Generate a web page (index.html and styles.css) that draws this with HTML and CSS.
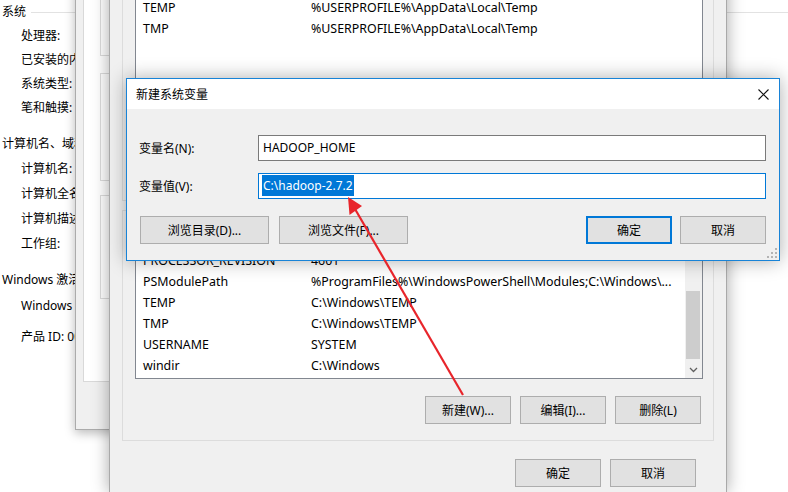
FILE: index.html
```html
<!DOCTYPE html>
<html lang="zh-CN">
<head>
<meta charset="utf-8">
<title>新建系统变量</title>
<link rel="stylesheet" href="styles.css">
</head>
<body>
<div class="cp">
  <div class="cp-row cp-head h24"><span>系统</span><i class="rule"></i></div>
  <div class="cp-row clip">处理器:</div>
  <div class="cp-row clip">已安装的内存(RAM):</div>
  <div class="cp-row clip">系统类型:</div>
  <div class="cp-row clip">笔和触摸:</div>
  <div class="cp-row cp-head clip gap12">计算机名、域和工作组设置</div>
  <div class="cp-row clip h25">计算机名:</div>
  <div class="cp-row clip h25">计算机全名:</div>
  <div class="cp-row clip h25">计算机描述:</div>
  <div class="cp-row clip h25">工作组:</div>
  <div class="cp-row cp-head clip gap12">Windows 激活</div>
  <div class="cp-row clip gap2">Windows 已激活</div>
  <div class="cp-row clip gap7">产品 ID: 00331-10000-00001-AA000</div>
</div>

<div class="win sysprops">
  <div class="tabpage">
    <div class="gb gb1"></div>
    <div class="gb gb2"></div>
    <div class="gb gb3"></div>
  </div>
</div>

<div class="win env">
  <div class="grp user-grp">
    <div class="list user-list">
      <div class="rows">
        <div class="row"><span class="c1">TEMP</span><span class="c2">%USERPROFILE%\AppData\Local\Temp</span></div>
        <div class="row"><span class="c1">TMP</span><span class="c2">%USERPROFILE%\AppData\Local\Temp</span></div>
      </div>
    </div>
    <div class="btns">
      <div class="btn"></div>
      <div class="btn"></div>
      <div class="btn"></div>
    </div>
  </div>
  <div class="grp sys-grp">
    <div class="list sys-list">
      <div class="rows">
        <div class="row"></div>
        <div class="row"><span class="c1">PROCESSOR_REVISION</span><span class="c2">4601</span></div>
        <div class="row"><span class="c1">PSModulePath</span><span class="c2">%ProgramFiles%\WindowsPowerShell\Modules;C:\Windows\...</span></div>
        <div class="row"><span class="c1">TEMP</span><span class="c2">C:\Windows\TEMP</span></div>
        <div class="row"><span class="c1">TMP</span><span class="c2">C:\Windows\TEMP</span></div>
        <div class="row"><span class="c1">USERNAME</span><span class="c2">SYSTEM</span></div>
        <div class="row"><span class="c1">windir</span><span class="c2">C:\Windows</span></div>
      </div>
      <div class="vscroll">
        <div class="sb-arrow"></div>
        <div class="sb-track"><div class="sb-thumb"></div></div>
        <div class="sb-arrow">
          <svg width="9" height="6" viewBox="0 0 9 6"><path d="M1 1 L4.5 4.5 L8 1" fill="none" stroke="#606060" stroke-width="1.3"/></svg>
        </div>
      </div>
    </div>
    <div class="btns">
      <div class="btn">新建(W)...</div>
      <div class="btn">编辑(I)...</div>
      <div class="btn">删除(L)</div>
    </div>
  </div>
  <div class="foot">
    <div class="btn">确定</div>
    <div class="btn">取消</div>
  </div>
</div>

<div class="dlg">
  <div class="dlg-title">
    <span class="dlg-t">新建系统变量</span>
    <span class="dlg-close">
      <svg width="11" height="11" viewBox="0 0 11 11"><path d="M0.5 0.5 L10.5 10.5 M10.5 0.5 L0.5 10.5" stroke="#111" stroke-width="1.1"/></svg>
    </span>
  </div>
  <div class="dlg-body">
    <div class="frow">
      <span class="flabel">变量名(N):</span>
      <div class="field">HADOOP_HOME</div>
    </div>
    <div class="frow frow2">
      <span class="flabel">变量值(V):</span>
      <div class="field focus"><span class="sel">C:\hadoop-2.7.2</span></div>
    </div>
    <div class="brow">
      <div class="btn wide">浏览目录(D)...</div>
      <div class="btn wide">浏览文件(F)...</div>
      <span class="spacer"></span>
      <div class="btn def">确定</div>
      <div class="btn">取消</div>
    </div>
  </div>
  <svg class="grip" width="10" height="10" viewBox="0 0 10 10">
    <rect x="8" y="0" width="2" height="2" fill="#b4b4b4"/>
    <rect x="4" y="4" width="2" height="2" fill="#b4b4b4"/>
    <rect x="8" y="4" width="2" height="2" fill="#b4b4b4"/>
    <rect x="0" y="8" width="2" height="2" fill="#b4b4b4"/>
    <rect x="4" y="8" width="2" height="2" fill="#b4b4b4"/>
    <rect x="8" y="8" width="2" height="2" fill="#b4b4b4"/>
  </svg>
</div>

<svg class="arrow" width="788" height="492" viewBox="0 0 788 492">
  <line x1="463" y1="395" x2="355" y2="209" stroke="#e8252b" stroke-width="2.2"/>
  <polygon points="348,197 349.5,215 362,206" fill="#e8252b"/>
</svg>
</body>
</html>
```

FILE: styles.css
```css
* { box-sizing: border-box; }
html, body { margin: 0; padding: 0; }
body {
  width: 788px;
  height: 492px;
  overflow: hidden;
  position: relative;
  background: #fff;
  font-family: "Noto Sans", "Noto Sans CJK SC", sans-serif;
  font-size: 12px;
  color: #000;
}

/* background control panel */
.cp { display: flex; flex-direction: column; }
.cp-row { height: 24px; line-height: 24px; padding-left: 21px; white-space: nowrap; }
.cp-row.clip { width: 76px; overflow: hidden; }
.cp-head { padding-left: 2px; display: flex; align-items: center; gap: 5px; }
.cp-head .rule { flex: 1; height: 1px; background: #e2e2e2; margin-top: 1px; }
.h24 { height: 24px; line-height: 22px; }
.h25 { height: 25px; line-height: 25px; }
.gap12 { margin-top: 12px; }
.gap2 { margin-top: 2px; }
.gap7 { margin-top: 7px; }

/* windows */
.win { position: absolute; }

.sysprops {
  left: 75px;
  top: -40px;
  width: 200px;
  height: 470px;
  background: #f0f0f0;
  border: 1px solid #ababab;
  box-shadow: 0 3px 10px rgba(0,0,0,.28);
  z-index: 1;
  padding-left: 7px;
}
.tabpage {
  height: 421px;
  background: #fff;
  border: 1px solid #d9d9d9;
  padding: 9px 0 0 16px;
  display: flex;
  flex-direction: column;
}
.gb { width: 300px; border: 1px solid #dcdcdc; }
.gb1 { height: 85px; }
.gb2 { height: 108px; margin-top: 17px; }
.gb3 { height: 104px; margin-top: 14px; }

.env {
  left: 109px;
  top: -30px;
  width: 618px;
  height: 522px;
  background: #f0f0f0;
  border: 1px solid #a9a9a9;
  border-bottom: 0;
  box-shadow: 0 0 16px rgba(0,0,0,.35);
  z-index: 2;
  padding: 5px 12px 0 12px;
  display: flex;
  flex-direction: column;
}
.grp {
  border: 1px solid #dcdcdc;
  padding: 12px 10px 12px 12px;
  display: flex;
  flex-direction: column;
}
.user-grp { height: 225px; }
.sys-grp { margin-top: 9px; padding-top: 17px; padding-bottom: 16px; }

.list {
  background: #fff;
  border: 1px solid #828790;
  display: flex;
}
.user-list { height: 161px; padding-top: 7px; }
.sys-list { height: 151px; }
.rows { flex: 1; display: flex; flex-direction: column; padding-left: 7px; }
.row { height: 21px; line-height: 21px; display: flex; white-space: nowrap; font-size: 12.4px; }
.c1 { width: 168px; flex: none; }
.c2 { flex: 1; overflow: hidden; }

.vscroll {
  width: 17px;
  height: 149px;
  background: #f0f0f0;
  display: flex;
  flex-direction: column;
}
.sb-arrow { height: 17px; display: flex; align-items: center; justify-content: center; }
.sb-track { flex: 1; padding: 45px 2px 0 1px; }
.sb-thumb { height: 68px; background: #cdcdcd; }

.btns {
  display: flex;
  justify-content: flex-end;
  gap: 9px;
  margin-top: 17px;
  margin-right: 2px;
}
.user-grp .btns { margin-top: 10px; }
.btn {
  width: 86px;
  height: 28px;
  background: #e1e1e1;
  border: 1px solid #adadad;
  display: flex;
  align-items: center;
  justify-content: center;
  white-space: nowrap;
}
.foot {
  display: flex;
  justify-content: flex-end;
  gap: 9px;
  margin-top: 18px;
  padding-right: 18px;
}

/* dialog */
.dlg {
  position: absolute;
  left: 126px;
  top: 78px;
  width: 654px;
  height: 183px;
  border: 1px solid #1883d7;
  background: #f0f0f0;
  box-shadow: 0 0 18px rgba(0,0,0,.32);
  z-index: 3;
  display: flex;
  flex-direction: column;
}
.dlg-title {
  height: 30px;
  background: #fff;
  display: flex;
  align-items: center;
  padding-left: 9px;
}
.dlg-t { flex: 1; }
.dlg-close { width: 32px; height: 30px; display: flex; align-items: center; justify-content: center; }
.dlg-body { padding: 26px 13px 0 12px; display: flex; flex-direction: column; }
.frow { display: flex; align-items: center; height: 26px; }
.frow2 { margin-top: 12px; }
.flabel { width: 119px; flex: none; }
.field {
  flex: 1;
  height: 26px;
  background: #fff;
  border: 1px solid #7a7a7a;
  padding-left: 4px;
  line-height: 24px;
  white-space: nowrap;
}
.field.focus { border-color: #0078d7; padding-left: 3px; padding-top: 1px; line-height: 21px; }
.sel { display: inline-block; background: #0078d7; color: #fff; padding: 0 1px; height: 21px; }
.brow { display: flex; margin-top: 17px; gap: 10px; }
.brow .wide { width: 129px; }
.brow .wide:first-child { margin-left: 1px; }
.brow .spacer { flex: 1; }
.brow .def { border: 2px solid #0078d7; margin-right: -2px; }
.grip { position: absolute; right: 2px; bottom: 2px; }

.arrow { position: absolute; left: 0; top: 0; z-index: 4; pointer-events: none; }
```
